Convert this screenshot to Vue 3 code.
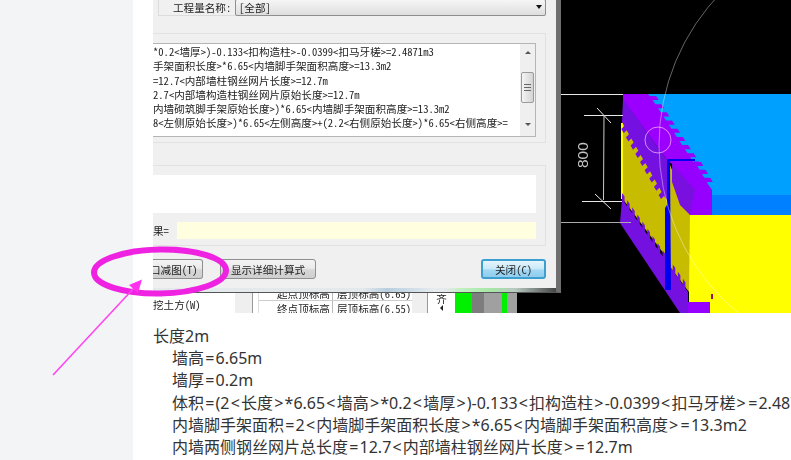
<template>
  <div class="page">
    <div class="gutter"></div>
    <div class="content">
      <div class="shot">
        <div class="left-col">
          <div class="dialog">
            <div class="dialog-body">
              <div class="filter-row">
                <span class="filter-label">工程量名称:</span>
                <div class="combo">
                  <span>[全部]</span>
                  <span class="combo-arrow"></span>
                </div>
              </div>
              <div class="group group-calc">
                <div class="textbox">
                  <div class="textbox-lines">
                    <div v-for="line in calcLines" :key="line" class="calc-line">{{ line }}</div>
                  </div>
                  <div class="scrollbar">
                    <span class="scroll-up"></span>
                    <span class="scroll-thumb"><i></i><i></i><i></i></span>
                    <span class="scroll-down"></span>
                  </div>
                </div>
              </div>
              <div class="group group-result">
                <div class="result-box"></div>
                <div class="result-row">
                  <span class="result-label">果=</span>
                  <div class="result-input"></div>
                </div>
              </div>
              <div class="button-row">
                <button class="btn btn-deduct">口减图(T)</button>
                <button class="btn btn-detail">显示详细计算式</button>
                <button class="btn btn-close">关闭(C)</button>
              </div>
            </div>
            <div class="dialog-frame"></div>
          </div>
          <div class="under-strip">
            <div class="under-menu">挖土方(W)</div>
            <div class="under-side"></div>
            <div class="under-table">
              <div class="under-rows">
                <div class="under-row"><span>起点顶标高</span><span>层顶标高(6.65)</span></div>
                <div class="under-row"><span>终点顶标高</span><span>层顶标高(6.55)</span></div>
              </div>
            </div>
            <div class="under-side2"></div>
            <div class="under-tool">
              <span>齐</span>
              <i class="tool-arrow"></i>
            </div>
            <div class="bar green-a"></div>
            <div class="bar grey-a"></div>
            <div class="bar grey-b"></div>
            <div class="bar green-b"></div>
            <div class="bar grey-c"></div>
            <div class="bar black"></div>
          </div>
        </div>

        <svg class="cad" viewBox="561 0 230 313" width="230" height="313">
          <rect x="561" y="0" width="230" height="313" fill="#000" />
          <polygon points="645,94 791,94 791,196 712,196" fill="#00a0ff" />
          <rect x="712" y="195" width="79" height="21" fill="#0080ff" />
          <rect x="689" y="215" width="102" height="98" fill="#ffff00" />
          <polygon points="622,122 667,160 667,258 622,198" fill="#c8bc00" />
          <polygon points="668,160 690,214 689,292 668,264" fill="#c8bc00" />
          <rect x="621" y="123" width="2" height="76" fill="#ffff00" />
          <polygon :points="upperWall" fill="#9b00ff" />
          <polygon :points="upperDark" fill="#7410e0" />
          <polygon :points="lowerBand" fill="#7410e0" />
          <polygon :points="blockFace" fill="#9600ff" />
          <polygon points="672,164 695,190 690,215 680,205 672,182" fill="#7a10e0" />
          <rect x="688" y="302" width="22" height="11" fill="#9600ff" />
          <rect x="711" y="294" width="2" height="5" fill="#9b1050" />
          <polygon points="667,160 670,160 671,290 665,290 665,208 667,205" fill="#0000f0" />
          <polyline points="668.5,200 668.5,160 695,160" fill="none" stroke="#0000f0" stroke-width="2" />
          <circle cx="877" cy="145" r="218" fill="none" stroke="#fff" stroke-opacity="0.4" stroke-width="1" />
          <circle cx="658" cy="140" r="13" fill="none" stroke="#ffc0ff" stroke-opacity="0.7" stroke-width="1" />
          <g stroke="#e8e8e8" stroke-width="1" fill="none">
            <line x1="561" y1="94.5" x2="623" y2="94.5" />
            <line x1="584" y1="115.5" x2="623" y2="115.5" />
            <line x1="597" y1="108" x2="611" y2="123" />
            <line x1="604" y1="115" x2="603.5" y2="200" stroke="#ccc" />
            <line x1="582" y1="201.5" x2="622" y2="201.5" />
            <line x1="595" y1="194" x2="611" y2="209" />
            <line x1="561" y1="222.5" x2="631" y2="222.5" stroke="#aaa" />
          </g>
          <text class="dim" transform="translate(588 168) rotate(-90)">800</text>
        </svg>
      </div>

      <div class="notes">
        <div class="note-title">长度2m</div>
        <div v-for="line in noteLines" :key="line" class="note-line">
          <template v-for="(part, i) in splitOps(line)" :key="i">
            <span v-if="isOp(part)" class="op">{{ part }}</span>
            <template v-else>{{ part }}</template>
          </template>
        </div>
      </div>
    </div>

    <svg class="markup" width="791" height="460" viewBox="0 0 791 460">
      <ellipse cx="160" cy="271.5" rx="66" ry="22" fill="none" stroke="#ee22e0" stroke-width="6" transform="rotate(-1 160 271)" />
      <line x1="53" y1="375" x2="134" y2="288" stroke="#ff44f0" stroke-width="1.6" />
      <polygon points="142,279.5 138,293 129,285" fill="#ff33ee" />
    </svg>
  </div>
</template>

<script setup>
const calcLines = [
  '*0.2<墙厚>)-0.133<扣构造柱>-0.0399<扣马牙槎>=2.4871m3',
  '手架面积长度>*6.65<内墙脚手架面积高度>=13.3m2',
  '=12.7<内部墙柱钢丝网片长度>=12.7m',
  '2.7<内部墙构造柱钢丝网片原始长度>=12.7m',
  '内墙砌筑脚手架原始长度>)*6.65<内墙脚手架面积高度>=13.3m2',
  '8<左侧原始长度>)*6.65<左侧高度>+(2.2<右侧原始长度>)*6.65<右侧高度>=',
]

const noteLines = [
  '墙高=6.65m',
  '墙厚=0.2m',
  '体积=(2<长度>*6.65<墙高>*0.2<墙厚>)-0.133<扣构造柱>-0.0399<扣马牙槎>=2.4871m3',
  '内墙脚手架面积=2<内墙脚手架面积长度>*6.65<内墙脚手架面积高度>=13.3m2',
  '内墙两侧钢丝网片总长度=12.7<内部墙柱钢丝网片长度>=12.7m',
]

const splitOps = (line) => line.split(/([=<>])/).filter(Boolean)
const isOp = (part) => part === '=' || part === '<' || part === '>'

// saw-tooth edge of the masonry walls, walked from one end to the other
function teeth(x0, y0, x1, y1, n, outX, outY) {
  const pts = []
  for (let i = 0; i < n; i++) {
    const ax = x0 + ((x1 - x0) * i) / n
    const ay = y0 + ((y1 - y0) * i) / n
    const bx = x0 + ((x1 - x0) * (i + 0.5)) / n
    const by = y0 + ((y1 - y0) * (i + 0.5)) / n
    pts.push(`${ax},${ay}`, `${ax + outX},${ay + outY}`, `${bx + outX},${by + outY}`, `${bx},${by}`)
  }
  pts.push(`${x1},${y1}`)
  return pts.join(' ')
}

const upperWall = `623,94 648,94 ${teeth(650, 96, 709, 186, 11, 6, 0)} 712,190 672,164 667,160 623,100`
const upperDark = `623,99 667,160 667,200 ${teeth(664, 196, 622, 122, 9, -3, 3)}`
const lowerBand = `${teeth(622, 199, 688, 292, 13, 0, -6)} 688,313 680,313 620,223`
const blockFace = `672,164 695,162 ${teeth(695, 162, 709, 186, 3, 6, 0)} 712,190 712,215 690,215`
</script>

<style scoped>
.page {
  position: relative;
  display: flex;
  width: 791px;
  height: 460px;
  overflow: hidden;
  background: #fff;
  font-family: "Noto Sans CJK SC", sans-serif;
}
.gutter {
  width: 133px;
  flex: none;
  background: #f3f4f5;
}
.content {
  flex: 1;
  min-width: 0;
  padding-left: 20px;
}
.shot {
  display: flex;
  height: 313px;
  overflow: hidden;
  filter: blur(0.3px);
  font-size: 10.6px;
  font-feature-settings: "hwid";
  color: #222;
}
.left-col {
  width: 408px;
  flex: none;
}
.cad {
  display: block;
  flex: none;
}
.dim {
  font-family: "Liberation Sans", sans-serif;
  font-size: 15.5px;
  fill: #c4c4c4;
}

.dialog {
  height: 293px;
  display: flex;
  flex-direction: column;
  background: #f0f0f0;
  border-right: 5px solid #6e6e6e;
  border-bottom: 1px solid #555;
  box-sizing: border-box;
}
.dialog-body {
  height: 288px;
  flex: none;
  overflow: hidden;
}
.dialog-frame {
  flex: 1;
  background: linear-gradient(to right, #e4e9ec 0, #e4e9ec 52%, #b8cfe0 58%, #e6ecef 70%, #e4e9ec 73%, #c2f0c2 76%, #a6e6a6 84%, #b8c8c0 90%, #444 100%);
}

.filter-row {
  display: flex;
  align-items: center;
  height: 16px;
  padding-left: 14px;
  margin-left: 5px;
  margin-right: 10px;
  border-left: 1px solid #dcdcdc;
  border-bottom: 1px solid #dcdcdc;
  box-sizing: border-box;
}
.filter-label {
  width: 62px;
  flex: none;
}
.combo {
  display: flex;
  align-items: center;
  justify-content: space-between;
  width: 311px;
  height: 17px;
  margin-top: -1px;
  padding: 0 3px;
  box-sizing: border-box;
  border: 1px solid #8e8f8f;
  border-radius: 2px;
  background: linear-gradient(#f6f6f6, #dedede);
}
.combo-arrow {
  width: 0;
  height: 0;
  border: 3px solid transparent;
  border-top: 4px solid #111;
  border-bottom: 0;
}

.group {
  box-sizing: border-box;
  margin-right: 10px;
  border: 1px solid #e2e2e2;
  border-left: 0;
  padding-top: 9px;
  padding-right: 9px;
}
.group-calc {
  height: 110px;
  margin-top: 17px;
}
.group-result {
  height: 81px;
  margin-top: 22px;
}
.textbox {
  display: flex;
  height: 94px;
  background: #fff;
  border: 1px solid #b5b5b5;
  border-left: 0;
  box-sizing: border-box;
}
.textbox-lines {
  flex: 1;
  min-width: 0;
  padding-top: 1px;
  overflow: hidden;
  background: #fff;
}
.calc-line {
  height: 14.3px;
  line-height: 14.3px;
  white-space: nowrap;
}
.scrollbar {
  width: 15px;
  flex: none;
  display: flex;
  flex-direction: column;
  align-items: center;
  background: #efefef;
}
.scroll-up,
.scroll-down {
  width: 0;
  height: 0;
  border: 3px solid transparent;
}
.scroll-up {
  border-bottom: 3px solid #555;
  border-top: 0;
  margin-top: 7px;
}
.scroll-down {
  border-top: 3px solid #555;
  border-bottom: 0;
  margin-top: 20px;
}
.scroll-thumb {
  display: flex;
  flex-direction: column;
  align-items: center;
  justify-content: center;
  gap: 2px;
  width: 13px;
  height: 31px;
  margin-top: 18px;
  box-sizing: border-box;
  border: 1px solid #9a9a9a;
  border-radius: 2px;
  background: linear-gradient(to right, #f4f4f4, #d4d4d4);
}
.scroll-thumb i {
  width: 7px;
  height: 1px;
  background: #666;
}
.result-box {
  height: 38px;
  background: #fff;
}
.result-row {
  display: flex;
  align-items: center;
  gap: 8px;
  height: 17px;
  margin-top: 9px;
}
.result-label {
  width: 16px;
  flex: none;
  white-space: nowrap;
}
.result-input {
  flex: 1;
  height: 17px;
  background: #ffffe0;
}

.button-row {
  display: flex;
  height: 20px;
  margin-top: 13px;
  margin-right: 10px;
}
.btn {
  height: 20px;
  padding: 0;
  box-sizing: border-box;
  font: inherit;
  font-feature-settings: "hwid";
  color: #222;
  white-space: nowrap;
  border: 1px solid #8e8f8f;
  border-radius: 3px;
  background: linear-gradient(#f3f3f3 0, #ebebeb 45%, #d6d6d6 55%, #cfcfcf 100%);
}
.btn-deduct {
  width: 50px;
  border-left: 0;
  border-radius: 0 3px 3px 0;
  text-align: left;
  text-indent: -3px;
  overflow: hidden;
}
.btn-detail {
  width: 96px;
  margin-left: 17px;
}
.btn-close {
  width: 65px;
  margin-left: auto;
  border: 2px solid #3d9fd0;
  background: linear-gradient(#e6f5fc 0, #c8e8f8 50%, #a4d8f4 55%, #8fcdee 100%);
}

.under-strip {
  display: flex;
  height: 20px;
  overflow: hidden;
  background: #fff;
}
.under-menu {
  width: 82px;
  flex: none;
  line-height: 24px;
  white-space: nowrap;
}
.under-side {
  width: 17px;
  flex: none;
  background: #efefef;
  border-right: 1px solid #999;
  margin-right: 5px;
  box-sizing: content-box;
}
.under-table {
  width: 154px;
  flex: none;
  overflow: hidden;
  background: #fff;
  border-left: 1px solid #ddd;
  box-sizing: border-box;
}
.under-rows {
  margin-top: -7px;
}
.under-row {
  display: flex;
  height: 15px;
  line-height: 15px;
  border-bottom: 1px solid #ccc;
  box-sizing: border-box;
  white-space: nowrap;
}
.under-row span:first-child {
  width: 74px;
  padding-left: 18px;
  box-sizing: border-box;
  border-right: 1px solid #bbb;
  flex: none;
}
.under-row span:last-child {
  padding-left: 4px;
}
.under-side2 {
  width: 16px;
  flex: none;
  background: #efefef;
  border-right: 1px solid #999;
  box-sizing: border-box;
}
.under-tool {
  width: 27px;
  flex: none;
  display: flex;
  flex-direction: column;
  align-items: center;
  box-sizing: border-box;
  line-height: 11px;
  background: #fff;
}
.tool-arrow {
  width: 0;
  height: 0;
  border: 3px solid transparent;
  border-right: 3px solid #222;
  border-left: 0;
  margin-top: 1px;
}
.bar {
  flex: none;
}
.green-a {
  width: 17px;
  background: #00f000;
}
.grey-a {
  width: 12px;
  background: #7d7d7d;
}
.grey-b {
  width: 18px;
  background: #a0a0a0;
}
.green-b {
  width: 5px;
  background: #00f000;
}
.grey-c {
  width: 10px;
  background: #a0a0a0;
}
.black {
  flex: 1;
  background: #000;
}

.notes {
  padding-top: 12px;
  font-family: "Noto Sans", "Noto Sans CJK SC", sans-serif;
  font-size: 16px;
  line-height: 22.2px;
  color: #333;
  white-space: nowrap;
}
.note-line {
  padding-left: 19px;
}
.op {
  padding: 0 1.2px;
}

.markup {
  position: absolute;
  left: 0;
  top: 0;
  pointer-events: none;
}
</style>
